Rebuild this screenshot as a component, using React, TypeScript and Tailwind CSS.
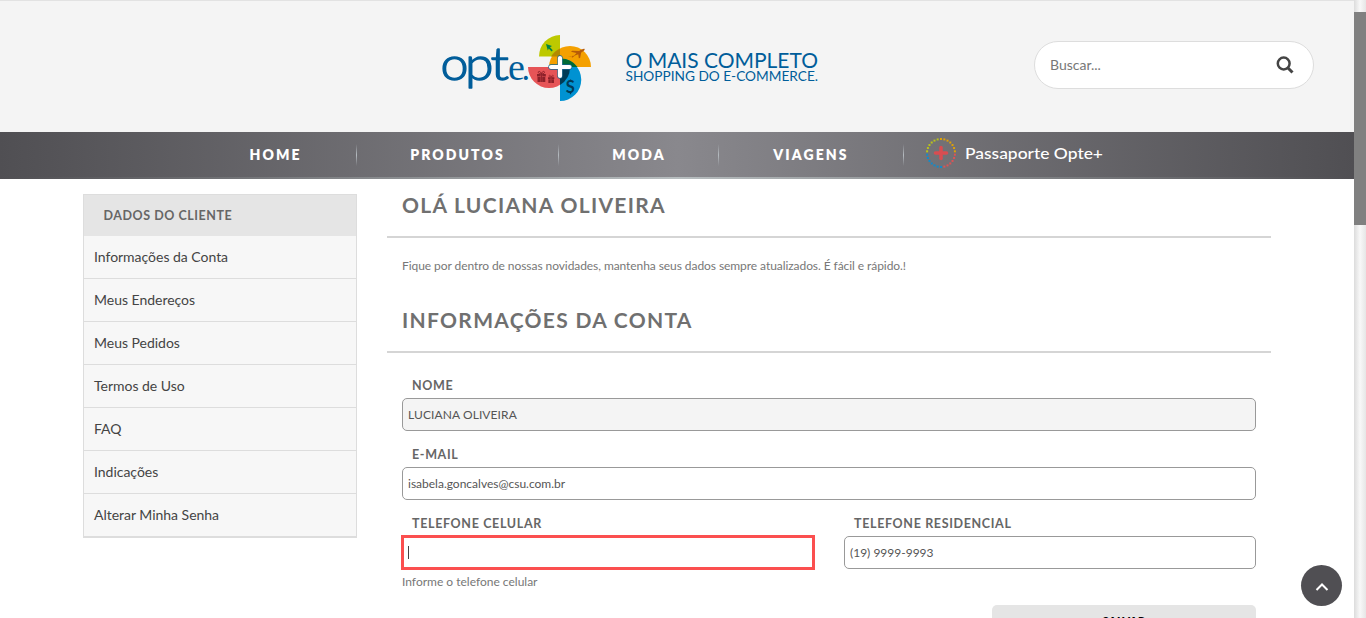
import React from "react";

const sideItems = [
  "Informações da Conta",
  "Meus Endereços",
  "Meus Pedidos",
  "Termos de Uso",
  "FAQ",
  "Indicações",
  "Alterar Minha Senha",
];

function Gift({ x, y, s }: { x: number; y: number; s: number }) {
  return (
    <g transform={`translate(${x} ${y}) scale(${s})`} fill="#8c2029">
      <path d="M0 3h3.6v2.4H0zM5.2 3h3.6v2.4H5.2zM.5 6h3.1v5H.5zM5.2 6h3.1v5H5.2zM3.9 3h1v8h-1z" />
      <path d="M4.4 3C1 3 .6.6 2 .4 3.300.3 4 1.500 4.400 3 4.800 1.500 5.500.3 6.800.4 8.200.6 7.800 3 4.400 3z" fill="none" stroke="#8c2029" strokeWidth=".9" />
    </g>
  );
}

function Logo() {
  return (
    <svg width="152" height="70" viewBox="441 33 152 70" className="block shrink-0" aria-label="opte.+">
      <g fill="#005d9a" stroke="#005d9a" strokeWidth="1.3" strokeLinejoin="round" fontWeight="300" fontFamily="Lato, sans-serif">
        <text x="440.500" y="79.500" fontSize="46" textLength="28" lengthAdjust="spacingAndGlyphs">o</text>
        <text x="465" y="79.500" fontSize="46" textLength="28.500" lengthAdjust="spacingAndGlyphs">p</text>
        <text x="490.500" y="79.500" fontSize="46" textLength="18.500" lengthAdjust="spacingAndGlyphs">t</text>
        <text x="508" y="79.500" fontSize="38" strokeWidth="0" fontWeight="400" fontFamily="Liberation Serif, serif">e</text>
        <text x="522" y="79.500" fontSize="32" strokeWidth="0" fontWeight="400">.</text>
      </g>
      <path d="M560 35v21.500h-21A21 21.500 0 0 1 560 35z" fill="#bdc900" />
      <path d="M549 67a21 21 0 0 1 42 0z" fill="#f4a000" />
      <path d="M551 56.500a21 21 0 0 1 9-8v8z" fill="#b28a00" />
      <path d="M528 67h42a21 21 0 0 1-42 0z" fill="#e65457" />
      <path d="M560 58.500a21.200 21.200 0 0 1 0 42.500z" fill="#0092d2" />
      <path d="M560 58.500a21 21 0 0 1 17.500 8.500H560z" fill="#006b36" />
      <path d="M560 67h10a21 21 0 0 1-10 18z" fill="#003b55" />
      <path d="M546 44l6 2-2 1.200 2.800 3-1.300 1.200-2.700-3-1 2.200z" fill="#008447" />
      <path d="M568 57l3-1 3-.3 2.500-2.700-5.500-1.200 1.200-1 7 .3c2-1.600 5-2.800 5.400-2 .5 1.200-2 2.800-3.500 3.600l-1 5.300-1.300.3-.5-4-3.300 1.300-2.500 2-.8-.1.700-1.400z" fill="#b65b09" />
      <Gift x={537} y={71} s={1} />
      <Gift x={548} y={75} s={0.72} />
      <text x="565.700" y="92.500" fontSize="16.500" fontWeight="700" fontFamily="Lato, sans-serif" fill="#003b57">S</text>
      <path d="M570.500 79.500v2M570.500 92.300v2" stroke="#003b57" strokeWidth="1.300" />
      <path d="M560 58v18M551 67h18.500" stroke="#12648d" strokeWidth="5.300" strokeLinecap="round" />
      <path d="M560 58v18M551 67h18.500" stroke="#fff" strokeWidth="4.200" strokeLinecap="round" />
    </svg>
  );
}

function PassportIcon() {
  const dots = Array.from({ length: 26 }, (_, i) => i);
  return (
    <svg width="32" height="32" viewBox="0 0 32 32" className="block shrink-0">
      {dots.map((i) => {
        const a = (i / 26) * Math.PI * 2 - Math.PI / 2;
        const color = i < 7 ? "#dda008" : i < 13 ? "#dc5356" : i < 20 ? "#128bc9" : "#b9c21a";
        return <rect key={i} x={15 + Math.cos(a) * 14} y={15 + Math.sin(a) * 14} width="2" height="2" fill={color} />;
      })}
      <path d="M16 10.500v11M10.500 16h11" stroke="#d84d51" strokeWidth="3.600" strokeLinecap="round" />
    </svg>
  );
}

function NavItem({ label, className }: { label: string; className: string }) {
  return (
    <div className={`relative flex h-full shrink-0 items-center justify-center ${className}`}>
      <span className="text-[14px] font-extrabold tracking-[2.100px] text-white">{label}</span>
      <span className="absolute right-0 top-[12px] h-[22px] w-px bg-linear-to-b from-transparent via-[#b5bbc0] to-transparent" />
    </div>
  );
}

function Heading({ children }: { children: React.ReactNode }) {
  return (
    <h2 className="h-[44px] border-b-2 border-[#d5d5d5] pl-[15px] text-[21px] font-bold leading-[22px] tracking-[1.300px] text-[#707070]">
      {children}
    </h2>
  );
}

function Field({ label, value, filled }: { label: string; value: string; filled?: boolean }) {
  return (
    <div className="h-[69px]">
      <label className="block h-[21px] pl-[10px] text-[12.5px] font-bold leading-[17px] tracking-[0.65px] text-[#666]">{label}</label>
      <div
        className={`flex h-[33px] items-center rounded-[5px] border border-[#999] pl-[5px] text-[12px] text-[#555] ${
          filled ? "bg-[#f4f4f4] tracking-[0.1px]" : "bg-white"
        }`}
      >
        {value}
      </div>
    </div>
  );
}

export default function App() {
  return (
    <div className="flex h-[618px] w-[1366px] overflow-hidden bg-white font-['Lato',sans-serif]">
      <div className="relative flex w-[1354px] shrink-0 flex-col overflow-hidden">
        <header className="flex h-[132px] shrink-0 items-start border-t border-[#e2e2e2] bg-[#f4f4f4] pl-[441px]">
          <div className="pt-8">
            <Logo />
          </div>
          <svg width="200" height="40" viewBox="0 0 200 40" className="ml-8 mt-[48px] block shrink-0" fill="#005d9a" fontFamily="Lato, sans-serif">
            <text x="0.500" y="19.300" fontSize="20.500" textLength="192.500" lengthAdjust="spacingAndGlyphs">O MAIS COMPLETO</text>
            <text x="0.500" y="32.300" fontSize="14" textLength="192.500" lengthAdjust="spacingAndGlyphs">SHOPPING DO E-COMMERCE.</text>
          </svg>
          <div className="ml-[209px] mt-10 flex h-12 w-[280px] shrink-0 items-center justify-between rounded-[24px] border border-[#ddd] bg-white pl-[15px] pr-[19px]">
            <span className="pb-[2px] text-[14px] text-[#777]">Buscar...</span>
            <svg width="18" height="18" viewBox="0 0 18 18" fill="none" stroke="#444" className="block">
              <circle cx="7.700" cy="7.500" r="5.900" strokeWidth="2.500" />
              <path d="M12 12l4.500 4.500" strokeWidth="3" />
            </svg>
          </div>
        </header>

        <div className="h-[47px] shrink-0 bg-linear-to-r from-[#504f53] via-[#b8bec0] to-[#504f53] pb-[2px]">
          <nav className="flex h-full bg-linear-to-r from-[#504f53] via-[#89888d] to-[#504f53] pl-[194px]">
            <NavItem label="HOME" className="w-[163px]" />
            <NavItem label="PRODUTOS" className="w-[202px] pr-[1px]" />
            <NavItem label="MODA" className="w-[160px]" />
            <NavItem label="VIAGENS" className="w-[185px] pr-[1px]" />
            <div className="flex items-start gap-2 pl-[21px] pt-[5px]">
              <PassportIcon />
              <svg width="140" height="32" viewBox="0 0 140 32" className="block">
                <text x="0" y="22" fontSize="16" fontWeight="500" fill="#fff" fontFamily="Lato, sans-serif" textLength="138" lengthAdjust="spacingAndGlyphs">
                  Passaporte Opte+
                </text>
              </svg>
            </div>
          </nav>
        </div>

        <div className="flex pl-[83px] pt-[15px]">
          <aside className="h-[344px] w-[274px] shrink-0 border border-b-2 border-[#ddd] bg-[#f7f7f7]">
            <div className="flex h-[41px] items-center bg-[#e5e5e5] pl-[19.5px] pt-[2px] text-[12.5px] font-bold tracking-[0.55px] text-[#666]">
              DADOS DO CLIENTE
            </div>
            <ul className="divide-y divide-[#ddd]">
              {sideItems.map((t) => (
                <li key={t} className="flex h-[43px] items-center pb-[2px] pl-[10px] text-[14px] tracking-[-0.02px] text-[#444]">
                  {t}
                </li>
              ))}
            </ul>
          </aside>

          <main className="ml-[30px] w-[884px] shrink-0">
            <Heading>OLÁ LUCIANA OLIVEIRA</Heading>
            <p className="h-[71px] pl-[15px] pt-5 text-[12px] leading-[16px] tracking-[-0.07px] text-[#777]">
              Fique por dentro de nossas novidades, mantenha seus dados sempre atualizados. É fácil e rápido.!
            </p>
            <Heading>INFORMAÇÕES DA CONTA</Heading>
            <form className="px-[15px] pt-[24px]">
              <Field label="NOME" value="LUCIANA OLIVEIRA" filled />
              <Field label="E-MAIL" value="isabela.goncalves@csu.com.br" />
              <div className="flex justify-between">
                <div className="w-[412px]">
                  <label className="block h-[20px] pl-[10px] text-[12.5px] font-bold leading-[17px] tracking-[0.65px] text-[#666]">
                    TELEFONE CELULAR
                  </label>
                  <div className="-mr-px -ml-px flex h-[35px] items-center border-3 border-[#fb4f4f] pl-[4px]">
                    <span className="h-[13px] w-px bg-[#444]" />
                  </div>
                  <p className="pt-[4px] text-[12px] leading-[16px] text-[#777]">Informe o telefone celular</p>
                </div>
                <div className="w-[412px]">
                  <Field label="TELEFONE RESIDENCIAL" value="(19) 9999-9993" />
                </div>
              </div>
              <div className="flex justify-end pt-[15px]">
                <div className="h-[36px] w-[264px] rounded-[5px] bg-[#e5e5e5] pt-[8px] text-center text-[11px] font-extrabold leading-[16px] tracking-[0.4px] text-black">
                  SALVAR
                </div>
              </div>
            </form>
          </main>
        </div>

        <div className="absolute left-[1301px] top-[565px] flex h-[41px] w-[41px] items-center justify-center rounded-full bg-[#504f53]">
          <svg width="14" height="10" viewBox="0 0 14 10" fill="none" stroke="#fff" strokeWidth="2" className="mt-[2px] block">
            <path d="M1.500 8L7 2.500 12.500 8" />
          </svg>
        </div>
      </div>

      <div className="flex w-3 shrink-0 flex-col bg-linear-to-r from-[#dcdcdc] via-[#f8f8f8] to-[#e6e6e6] pt-3">
        <div className="h-[213px] bg-[#808080]" />
      </div>
    </div>
  );
}
